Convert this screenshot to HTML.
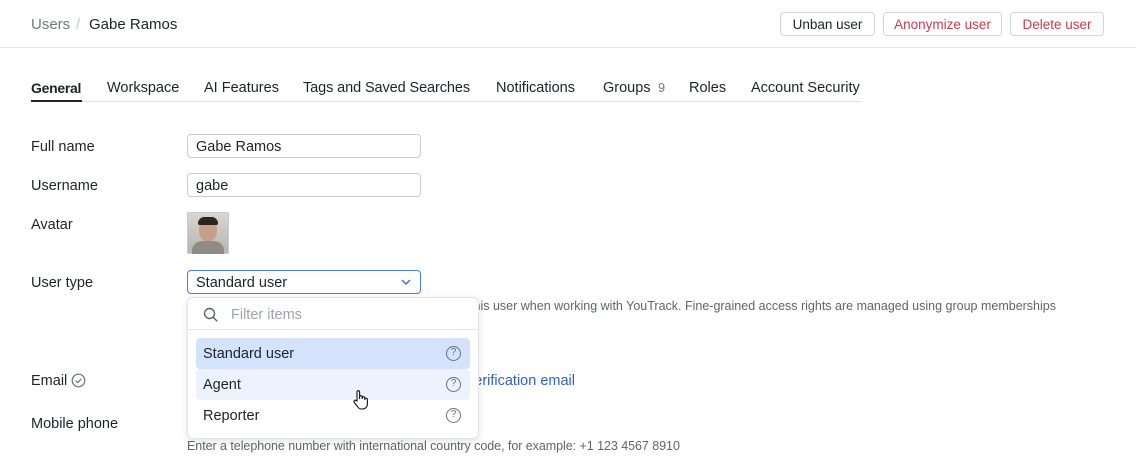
<!DOCTYPE html>
<html><head><meta charset="utf-8"><style>
*{margin:0;padding:0;box-sizing:border-box}
body{width:1136px;height:463px;overflow:hidden;background:#fff;font-family:"Liberation Sans",sans-serif;color:#1f2326;position:relative;font-size:14.5px}
.a{position:absolute;white-space:nowrap}
.btn{position:absolute;top:12px;height:24px;border:1px solid #d2d5da;border-radius:4px;font-size:13.5px;line-height:23px;text-align:center;background:#fff}
.tab{position:absolute;top:80px;font-size:14.5px}
.lbl{position:absolute;left:31px;font-size:14.5px}
.inp{position:absolute;left:187px;width:234px;height:24px;border:1px solid #c9ccd2;border-radius:4px;padding-left:8px;line-height:24px;font-size:14.5px}
.item{position:absolute;left:196px;width:274px;height:31px;border-radius:4px;padding-left:7px;line-height:32px;font-size:14.5px}
.q{position:absolute;right:9px;top:8px;width:15px;height:15px;border:1.3px solid #6c7078;border-radius:50%;font-size:10px;line-height:12px;text-align:center;color:#6c7078}
</style></head><body>
<div class="a" style="left:31px;top:16px;font-size:15px;color:#737880">Users</div>
<div class="a" style="left:76px;top:16px;font-size:15px;color:#c4c7cc">/</div>
<div class="a" style="left:89px;top:16px;font-size:15px">Gabe Ramos</div>
<div class="btn" style="left:780px;width:95px">Unban user</div>
<div class="btn" style="left:883px;width:119px;color:#d03a4a">Anonymize user</div>
<div class="btn" style="left:1010px;width:94px;color:#d03a4a">Delete user</div>
<div class="a" style="left:0;top:47px;width:1136px;height:1px;background:#e6e8eb"></div>

<div class="a" style="left:31px;top:101px;width:831px;height:1px;background:#dfe1e5"></div>
<div class="a" style="left:31px;top:100px;width:51px;height:2px;background:#1f2326"></div>
<div class="tab" style="left:31px;font-weight:bold;letter-spacing:-0.3px;font-size:14px">General</div>
<div class="tab" style="left:107px">Workspace</div>
<div class="tab" style="left:204px">AI Features</div>
<div class="tab" style="left:303px;letter-spacing:-0.1px">Tags and Saved Searches</div>
<div class="tab" style="left:496px">Notifications</div>
<div class="tab" style="left:603px">Groups <span style="color:#737880;font-size:12.5px">&nbsp;9</span></div>
<div class="tab" style="left:689px">Roles</div>
<div class="tab" style="left:751px">Account Security</div>

<div class="lbl" style="top:139px">Full name</div>
<div class="inp" style="top:134px">Gabe Ramos</div>
<div class="lbl" style="top:178px">Username</div>
<div class="inp" style="top:173px">gabe</div>
<div class="lbl" style="top:217px">Avatar</div>
<div class="a" style="left:187px;top:212px;width:42px;height:42px;border:1px solid #c9ccd2;background:linear-gradient(#d8d6d2,#b9b4ae)">
<div style="position:absolute;left:11px;top:6px;width:18px;height:22px;border-radius:45%;background:#c79e86"></div>
<div style="position:absolute;left:10px;top:4px;width:20px;height:8px;border-radius:8px 8px 2px 2px;background:#2b2522"></div>
<div style="position:absolute;left:4px;top:28px;width:32px;height:13px;border-radius:10px 10px 0 0;background:#8f8c88"></div></div>
<div class="lbl" style="top:275px">User type</div>
<div class="inp" style="top:270px;border-color:#4a7de0">Standard user<svg style="position:absolute;right:9px;top:8px" width="10" height="7"><path d="M1 1l4 4 4-4" fill="none" stroke="#3d6fd6" stroke-width="1.5"/></svg></div>
<div class="a" style="right:80px;top:299px;font-size:12.5px;color:#5f646b">Defines the role of this user when working with YouTrack. Fine-grained access rights are managed using group memberships</div>
<div class="lbl" style="top:373px">Email <svg style="vertical-align:-3px" width="15" height="15"><circle cx="7.5" cy="7.5" r="6.3" fill="none" stroke="#6c7078" stroke-width="1.2"/><path d="M4.7 7.6l2 2 3.6-3.8" fill="none" stroke="#6c7078" stroke-width="1.2"/></svg></div>
<div class="a" style="right:561px;top:373px;color:#2f62c6">Send verification email</div>
<div class="lbl" style="top:416px">Mobile phone</div>
<div class="a" style="left:187px;top:439px;font-size:12.5px;color:#5f646b;letter-spacing:-0.05px">Enter a telephone number with international country code, for example: +1 123 4567 8910</div>

<div class="a" style="left:187px;top:297px;width:292px;height:142px;background:#fff;border:1px solid #e2e4e8;border-radius:6px;box-shadow:0 2px 8px rgba(0,0,0,.12)"></div>
<svg class="a" style="left:203px;top:307px" width="16" height="16"><circle cx="6.5" cy="6.5" r="5" fill="none" stroke="#5f646b" stroke-width="1.4"/><path d="M10.2 10.2l4 4" stroke="#5f646b" stroke-width="1.4"/></svg>
<div class="a" style="left:231px;top:307px;color:#9ea3ab">Filter items</div>
<div class="a" style="left:188px;top:329px;width:290px;height:1px;background:#e2e4e8"></div>
<div class="item" style="top:338px;background:#d5e2fb">Standard user<div class="q">?</div></div>
<div class="item" style="top:369px;background:#edf3fe">Agent<div class="q">?</div></div>
<div class="item" style="top:400px">Reporter<div class="q">?</div></div>
<svg class="a" style="left:352px;top:389px" width="18" height="22"><path d="M5 12V3a1.3 1.3 0 0 1 2.6 0v7V8a1.3 1.3 0 0 1 2.6 0v2-1a1.3 1.3 0 0 1 2.6 0v2-.5a1.3 1.3 0 0 1 2.6 0V15c0 3-2 5-5 5h-1c-2 0-3-1-4-2.5L2 13a1.3 1.3 0 0 1 2-1.5z" fill="#fff" stroke="#111" stroke-width="1.1"/></svg>
</body></html>
